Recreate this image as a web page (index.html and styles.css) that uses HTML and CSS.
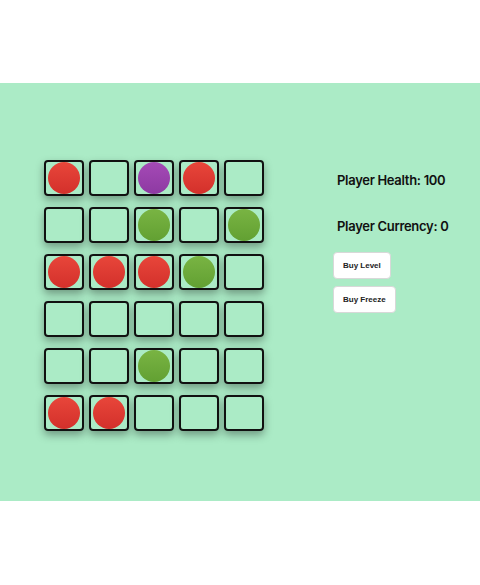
FILE: index.html
```html
<!DOCTYPE html>
<html>
<head>
<meta charset="utf-8">
<link rel="stylesheet" href="styles.css">
</head>
<body>
<div class="stage">
  <div class="board">
    <div class="cell"><span class="ball red"></span></div>
    <div class="cell"></div>
    <div class="cell"><span class="ball purple"></span></div>
    <div class="cell"><span class="ball red"></span></div>
    <div class="cell"></div>

    <div class="cell"></div>
    <div class="cell"></div>
    <div class="cell"><span class="ball green"></span></div>
    <div class="cell"></div>
    <div class="cell"><span class="ball green"></span></div>

    <div class="cell"><span class="ball red"></span></div>
    <div class="cell"><span class="ball red"></span></div>
    <div class="cell"><span class="ball red"></span></div>
    <div class="cell"><span class="ball green"></span></div>
    <div class="cell"></div>

    <div class="cell"></div>
    <div class="cell"></div>
    <div class="cell"></div>
    <div class="cell"></div>
    <div class="cell"></div>

    <div class="cell"></div>
    <div class="cell"></div>
    <div class="cell"><span class="ball green"></span></div>
    <div class="cell"></div>
    <div class="cell"></div>

    <div class="cell"><span class="ball red"></span></div>
    <div class="cell"><span class="ball red"></span></div>
    <div class="cell"></div>
    <div class="cell"></div>
    <div class="cell"></div>
  </div>
  <div class="side">
    <p class="stat">Player Health: 100</p>
    <p class="stat">Player Currency: 0</p>
    <button class="btn">Buy Level</button>
    <button class="btn">Buy Freeze</button>
  </div>
</div>
</body>
</html>
```
FILE: styles.css
```css
html, body {
  margin: 0;
  padding: 0;
  background: #ffffff;
}
.stage {
  margin-top: 83px;
  height: 418px;
  background: #abebc6;
  display: flex;
  align-items: flex-start;
}
.board {
  margin-left: 44px;
  margin-top: 77px;
  display: grid;
  grid-template-columns: repeat(5, 40px);
  grid-auto-rows: 36px;
  column-gap: 5px;
  row-gap: 11px;
}
.cell {
  box-sizing: border-box;
  border: 2px solid #111;
  border-radius: 4px;
  box-shadow: 0 4px 8px rgba(0, 0, 0, 0.35);
  display: flex;
  align-items: center;
  justify-content: center;
}
.ball {
  width: 32px;
  height: 32px;
  border-radius: 50%;
  flex: none;
}
.red { background: linear-gradient(#e8463a, #d3302b); }
.purple { background: linear-gradient(#a54ab6, #8d3aa2); }
.green { background: linear-gradient(#79b443, #62a032); }
.side {
  margin-left: 69px;
  margin-top: 88px;
  display: flex;
  flex-direction: column;
  align-items: flex-start;
  font-family: "Inter", "Noto Sans", sans-serif;
}
.stat {
  margin: 0 0 0 4px;
  font-size: 13px;
  font-weight: 600;
  letter-spacing: -0.3px;
  line-height: 18px;
  color: #111;
}
.stat + .stat {
  margin-top: 28px;
  margin-bottom: 17px;
}
.btn {
  box-sizing: border-box;
  height: 27px;
  padding: 0 9px;
  margin-bottom: 7px;
  background: #fff;
  border: 1px solid #d8d8d8;
  border-radius: 4px;
  font-family: "Liberation Sans", Arial, sans-serif;
  font-size: 8px;
  font-weight: 700;
  color: #222;
}
```
